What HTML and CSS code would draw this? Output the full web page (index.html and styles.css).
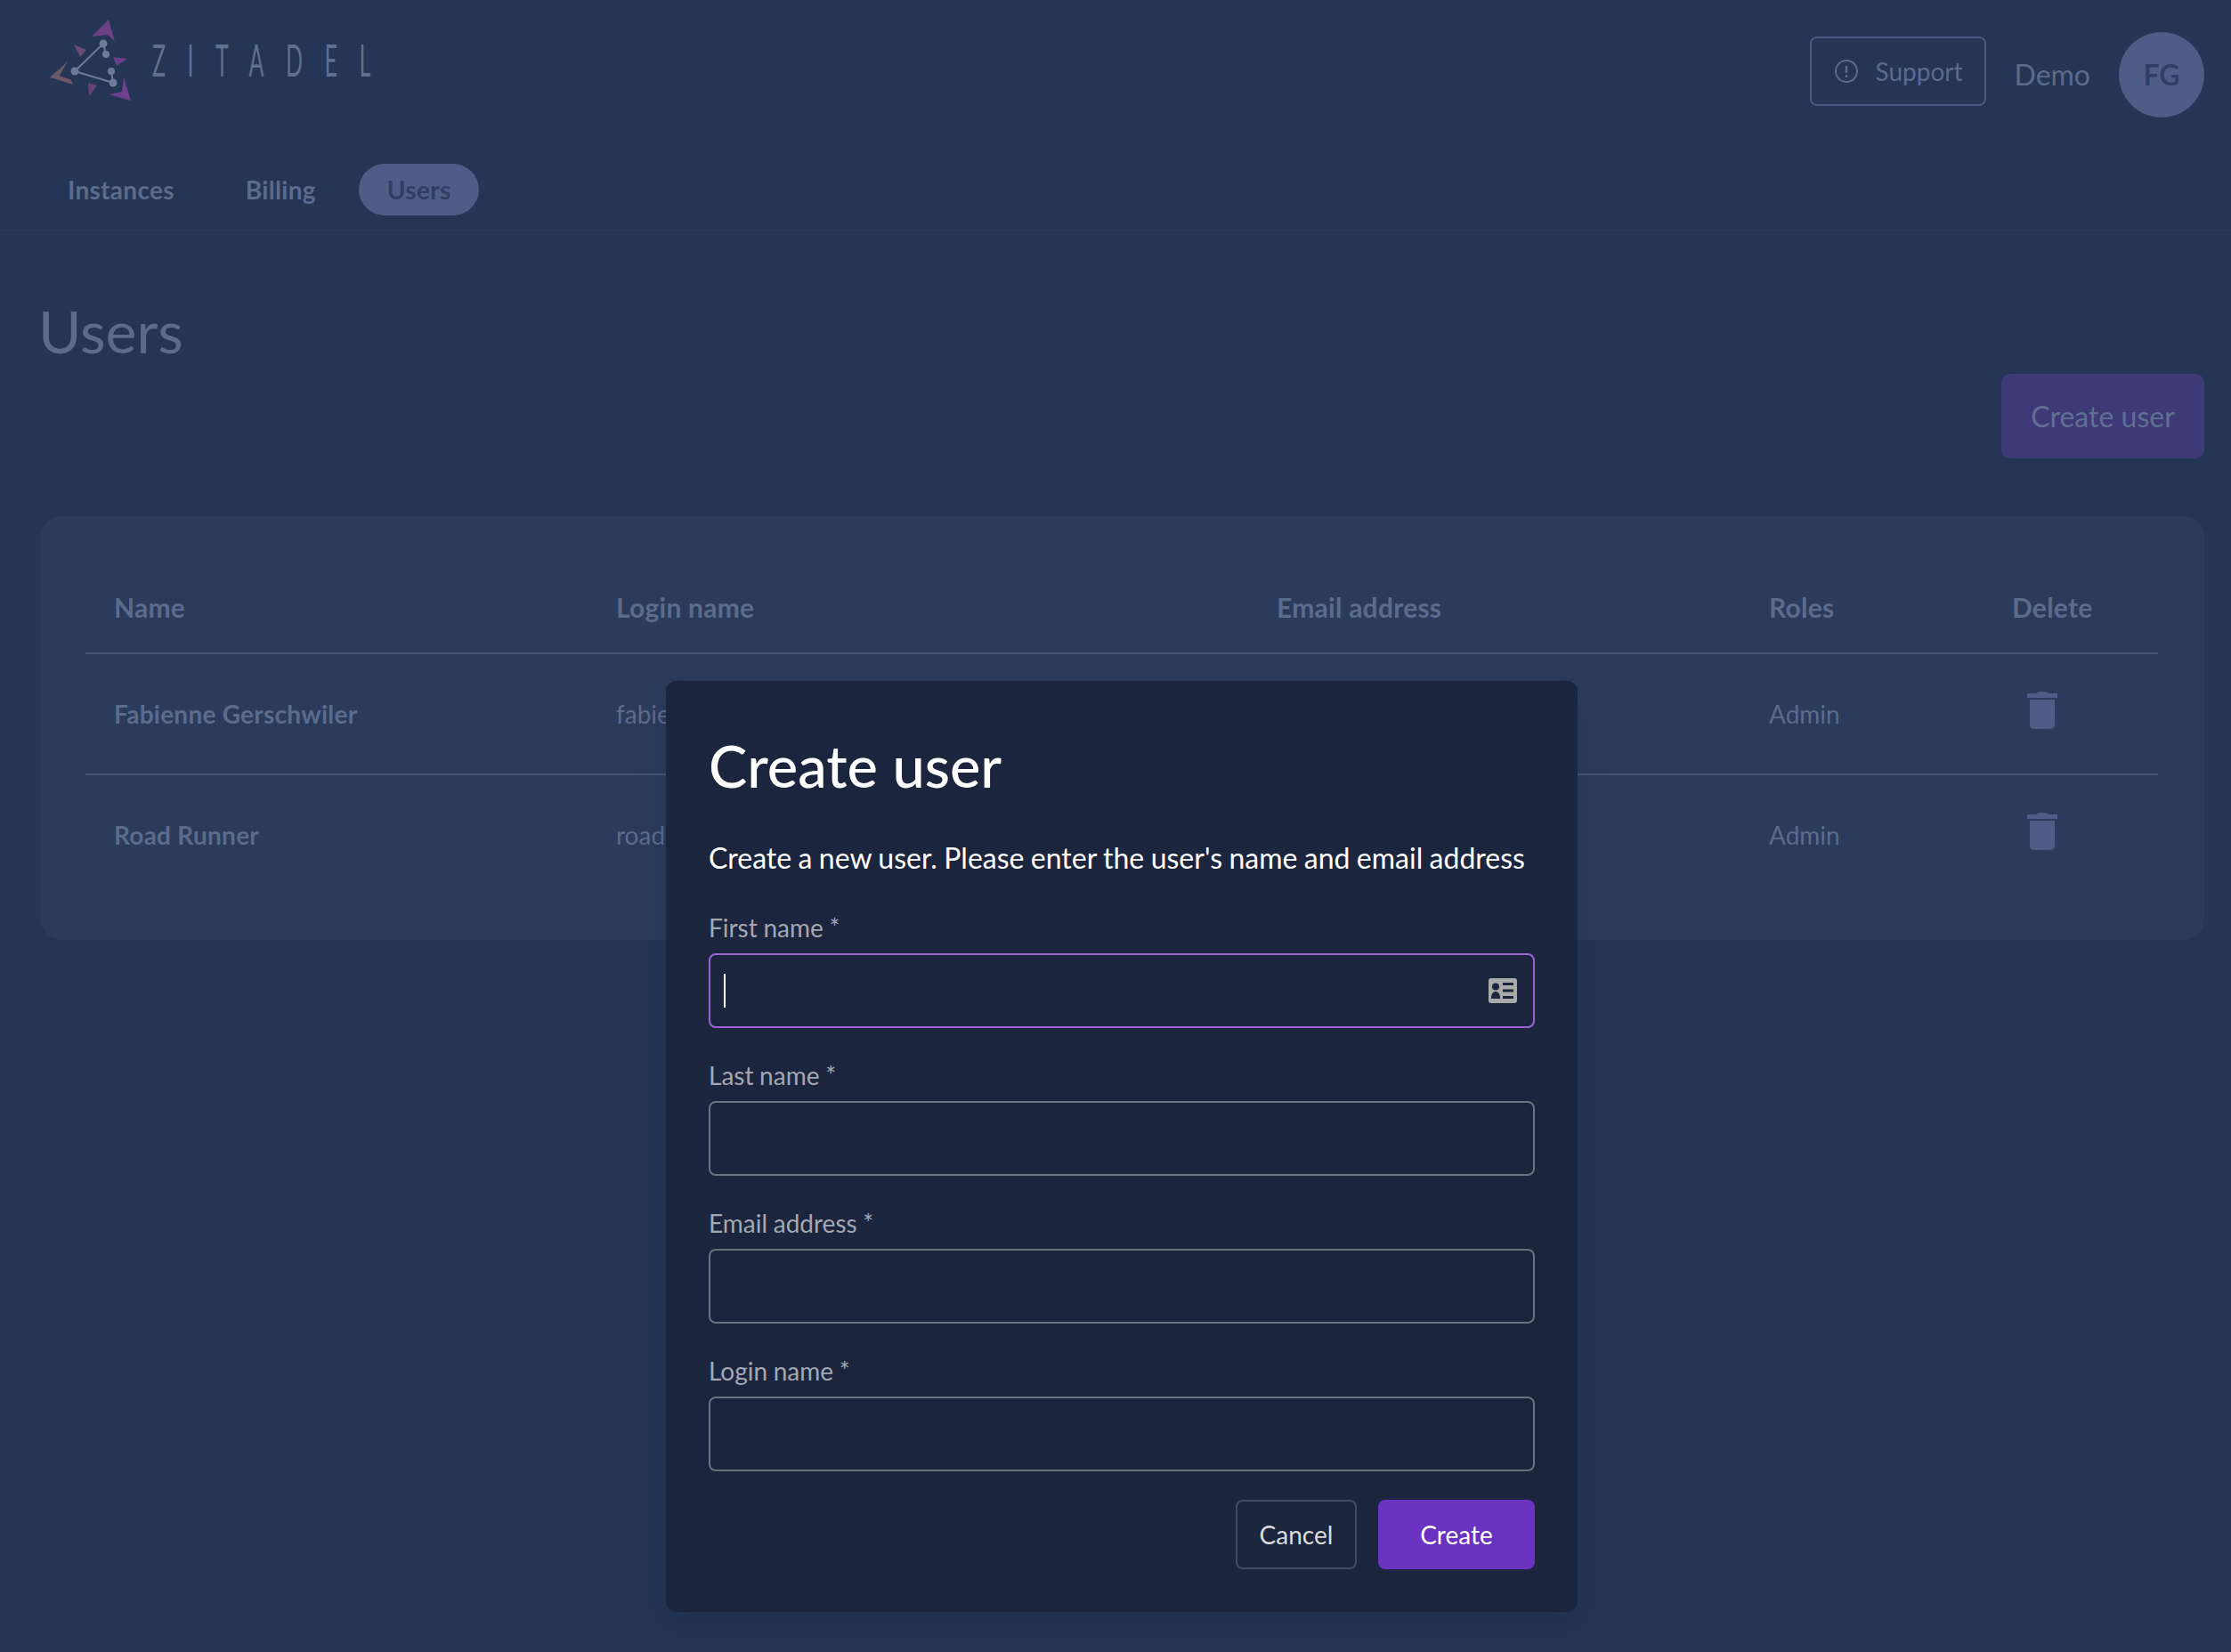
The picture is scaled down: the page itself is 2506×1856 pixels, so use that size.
FILE: index.html
```html
<!DOCTYPE html>
<html lang="en">
<head>
    <meta charset="UTF-8">
    <title>Users - ZITADEL</title>
    <link rel="stylesheet" href="styles.css">
</head>
<body>

    <header class="header">
        <div class="topbar">
            <a class="logo">
                <svg class="logo-mark" viewBox="0 0 130 120" width="130" height="120">
                    <polygon fill="#6d3f85" points="102,22 109,47 101,39 83,41"/>
                    <polygon fill="#6d3f8c" points="119,87 127,113 102,106 117,103"/>
                    <polygon fill="#6b5766" points="56,69 36,87 62,95 60,90 47,85"/>
                    <polygon fill="#694a72" points="63,50 77,56 70,64"/>
                    <polygon fill="#693f88" points="107,64 123,66 111,74"/>
                    <polygon fill="#66457c" points="79,93 89,96 80,108"/>
                    <g stroke="#6c7b97" stroke-width="2">
                        <line x1="96" y1="49" x2="64" y2="80"/>
                        <line x1="64" y1="80" x2="107" y2="93"/>
                        <line x1="96" y1="49" x2="99" y2="61"/>
                        <line x1="105" y1="80" x2="107" y2="93"/>
                    </g>
                    <g fill="#6c7b97">
                        <circle cx="96" cy="49" r="4.5"/>
                        <circle cx="99" cy="61" r="4"/>
                        <circle cx="64" cy="80" r="4.5"/>
                        <circle cx="105" cy="80" r="4"/>
                        <circle cx="107" cy="93" r="4.5"/>
                    </g>
                </svg>
                <span class="logo-text">ZITADEL</span>
            </a>
            <div class="topbar-right">
                <button class="support-btn">
                    <svg viewBox="0 0 28 28" width="28" height="28">
                        <circle cx="14" cy="14" r="12" fill="none" stroke="#5b6b8c" stroke-width="2"/>
                        <line x1="14" y1="8" x2="14" y2="16" stroke="#5b6b8c" stroke-width="2.4"/>
                        <circle cx="14" cy="19.5" r="1.5" fill="#5b6b8c"/>
                    </svg>
                    Support
                </button>
                <span class="org-name">Demo</span>
                <span class="avatar">FG</span>
            </div>
        </div>
        <nav class="nav">
            <a class="nav-item">Instances</a>
            <a class="nav-item">Billing</a>
            <a class="nav-item active">Users</a>
        </nav>
    </header>

    <main class="content">
        <h1>Users</h1>
        <div class="actions">
            <button class="create-user-btn">Create user</button>
        </div>
        <div class="card">
            <table>
                <thead>
                    <tr>
                        <th class="col-name">Name</th>
                        <th class="col-login">Login name</th>
                        <th class="col-email">Email address</th>
                        <th class="col-roles">Roles</th>
                        <th class="col-delete">Delete</th>
                    </tr>
                </thead>
                <tbody>
                    <tr>
                        <td class="user-name">Fabienne Gerschwiler</td>
                        <td>fabienne</td>
                        <td></td>
                        <td>Admin</td>
                        <td>
                            <svg class="trash" viewBox="0 0 34 42" width="34" height="42">
                                <path d="M10 2 Q12 0 14 0 H20 Q22 0 24 2 H34 V7 H0 V2 Z"/>
                                <path d="M3 9 H31 V37 Q31 42 26 42 H8 Q3 42 3 37 Z"/>
                            </svg>
                        </td>
                    </tr>
                    <tr>
                        <td class="user-name">Road Runner</td>
                        <td>roadrun</td>
                        <td></td>
                        <td>Admin</td>
                        <td>
                            <svg class="trash" viewBox="0 0 34 42" width="34" height="42">
                                <path d="M10 2 Q12 0 14 0 H20 Q22 0 24 2 H34 V7 H0 V2 Z"/>
                                <path d="M3 9 H31 V37 Q31 42 26 42 H8 Q3 42 3 37 Z"/>
                            </svg>
                        </td>
                    </tr>
                </tbody>
            </table>
        </div>
    </main>

    <div class="overlay">
        <form class="dialog">
            <h2>Create user</h2>
            <p class="dialog-text">Create a new user. Please enter the user's name and email address</p>

            <label class="label">First name *</label>
            <div class="field focused">
                <span class="caret"></span>
                <input type="text">
                <svg viewBox="0 0 32 28" width="32" height="28">
                    <path fill="#aaaaaa" fill-rule="evenodd" d="M3 0 H29 Q32 0 32 3 V25 Q32 28 29 28 H3 Q0 28 0 25 V3 Q0 0 3 0 Z M16 5 V8 H28 V5 Z M16 12.5 V15.5 H28 V12.5 Z M16 20 V23 H28 V20 Z"/>
                    <circle cx="8" cy="9.5" r="4" fill="#1c253e"/>
                    <path fill="#1c253e" d="M3 23 Q3 15 8 15 Q13 15 13 23 Z"/>
                </svg>
            </div>

            <label class="label">Last name *</label>
            <div class="field"><input type="text"></div>

            <label class="label">Email address *</label>
            <div class="field"><input type="text"></div>

            <label class="label">Login name *</label>
            <div class="field"><input type="text"></div>

            <div class="dialog-actions">
                <button type="button" class="btn-cancel">Cancel</button>
                <button type="button" class="btn-create">Create</button>
            </div>
        </form>
    </div>

</body>
</html>
```

FILE: styles.css
```css
* {
    font-family: 'Lato', sans-serif;
    margin: 0; padding: 0;
    box-sizing: border-box;
}
body {
    background: #243556;
    color: #5b6b8c;
    min-height: 1856px;
}
button {
    cursor: pointer;
}

.header {
    height: 259px;
    border-bottom: 1px solid #2b3b5c;
}
.topbar {
    height: 172px;
    display: flex;
    justify-content: space-between;
    padding: 0 30px 0 20px;
}
.logo {
    display: flex;
    align-items: flex-start;
}
.logo-text {
    font-size: 50px;
    font-weight: 400;
    color: #5f6f8f;
    letter-spacing: 49px;
    line-height: 66px;
    margin: 34px 0 0 21px;
    display: inline-block;
    transform: scaleX(0.5);
    transform-origin: left center;
}
.topbar-right {
    display: flex;
    align-items: flex-start;
    padding-top: 36px;
}
.support-btn {
    display: flex;
    align-items: center;
    gap: 19px;
    width: 198px;
    height: 78px;
    margin-top: 5px;
    padding-left: 25px;
    background: none;
    border: 2px solid #4a5a85;
    border-radius: 8px;
    color: #5b6b8c;
    font-size: 28px;
}
.org-name {
    margin: 0 32px;
    font-size: 32px;
    line-height: 96px;
}
.avatar {
    width: 96px;
    height: 96px;
    border-radius: 50%;
    background: #4e5d88;
    color: #2e3e64;
    font-size: 32px;
    font-weight: 700;
    line-height: 96px;
    text-align: center;
}

.nav {
    display: flex;
    align-items: center;
    gap: 16px;
    padding: 12px 0 0 44px;
}
.nav-item {
    height: 58px;
    padding: 0 32px;
    border-radius: 29px;
    font-size: 28px;
    font-weight: 700;
    letter-spacing: 0.3px;
    line-height: 58px;
}
.nav-item.active {
    background: #4e5d88;
    color: #2e3e64;
}

.content {
    padding: 0 30px 0 45px;
}
h1 {
    padding-top: 74px;
    font-size: 66px;
    font-weight: 400;
    line-height: 78px;
    margin-left: -2px;
    color: #5b6b8c;
}
.actions {
    display: flex;
    justify-content: flex-end;
    margin-top: 9px;
}
.create-user-btn {
    width: 228px;
    height: 95px;
    background: #3e3a78;
    border: none;
    border-radius: 10px;
    color: #5f6f91;
    font-size: 32px;
}
.card {
    margin-top: 65px;
    padding: 50px 52px 50px 51px;
    background: #2b3b5c;
    border-radius: 24px;
}
table {
    width: 100%;
    table-layout: fixed;
    border-collapse: collapse;
}
th {
    height: 104px;
    padding: 0 0 0 32px;
    border-bottom: 2px solid #45557a;
    text-align: left;
    font-size: 30px;
    font-weight: 700;
    letter-spacing: 0.25px;
}
td {
    height: 136px;
    padding: 0 0 0 32px;
    font-size: 28px;
}
tbody tr:first-child td {
    border-bottom: 2px solid #45557a;
}
tbody tr:last-child td {
    padding-bottom: 2px;
}
.col-name { width: 564px; }
.col-login { width: 742px; }
.col-email { width: 553px; }
.col-roles { width: 273px; }
.user-name {
    font-weight: 700;
    letter-spacing: 0.25px;
}
.trash {
    display: block;
    margin: -8px 0 0 17px;
    fill: #4e5d88;
}

.overlay {
    position: absolute;
    top: 0; left: 0; right: 0;
    padding: 765px 0 0 748px;
}
.dialog {
    width: 1024px;
    height: 1046px;
    padding: 56px 48px 48px;
    background: #1c253e;
    border-radius: 12px;
    box-shadow: 0 10px 40px rgba(0,0,0,0.1);
}
h2 {
    font-size: 65px;
    font-weight: 500;
    line-height: 78px;
    color: white;
}
.dialog-text {
    margin-top: 44px;
    font-size: 32px;
    line-height: 42px;
    color: white;
    word-spacing: -0.8px;
    white-space: nowrap;
}
.label {
    display: block;
    margin-top: 35px;
    font-size: 28px;
    line-height: 36px;
    word-spacing: -0.5px;
    color: #a3a8b3;
}
.dialog-text + .label {
    margin-top: 39px;
}
.field {
    display: flex;
    align-items: center;
    height: 84px;
    margin-top: 11px;
    padding: 0 18px 0 15px;
    border: 2px solid #6b7280;
    border-radius: 8px;
}
.field.focused {
    border-color: #9a63d6;
}
.field input {
    flex: 1;
    min-width: 0;
    background: none;
    border: none;
    outline: none;
    color: white;
}
.caret {
    width: 2px;
    height: 38px;
    background: white;
}
.dialog-actions {
    display: flex;
    justify-content: flex-end;
    gap: 24px;
    margin-top: 32px;
}
.btn-cancel, .btn-create {
    height: 78px;
    border-radius: 8px;
    font-size: 28px;
}
.btn-cancel {
    width: 136px;
    background: none;
    border: 2px solid #444b5e;
    color: #dcdcdc;
}
.btn-create {
    width: 176px;
    background: #6a32c0;
    border: none;
    color: white;
}
```
